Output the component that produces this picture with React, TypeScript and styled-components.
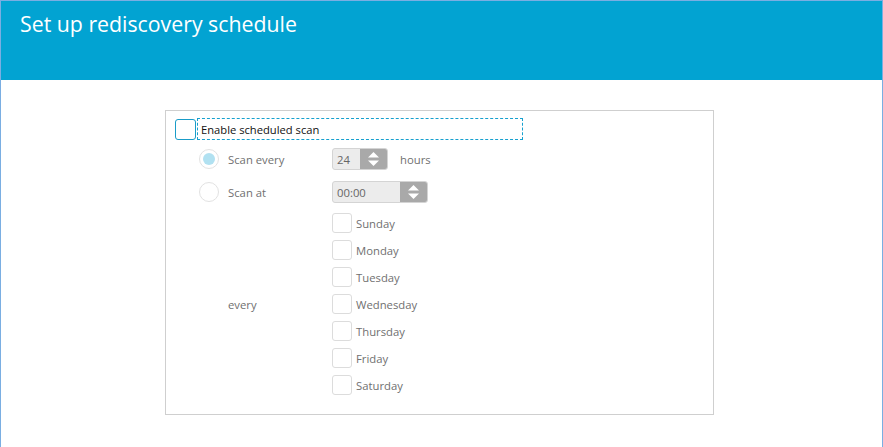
import React from "react";
import styled, { createGlobalStyle } from "styled-components";

const GlobalStyle = createGlobalStyle`
  html, body {
    margin: 0;
    padding: 0;
    background: #ffffff;
  }
  body {
    font-family: "Open Sans", "Noto Sans", "Liberation Sans", sans-serif;
  }
`;

const Window = styled.div`
  box-sizing: border-box;
  width: 883px;
  height: 447px;
  border: 1px solid #7aaee2;
  border-bottom: none;
  background: #ffffff;
  overflow: hidden;
`;

const Header = styled.header`
  height: 79px;
  background: #02a3d2;
  padding: 8px 0 0 19px;
  box-sizing: border-box;
`;

const Title = styled.h1`
  margin: 0;
  color: #ffffff;
  font-size: 21.3px;
  font-weight: 400;
`;

const Body = styled.main`
  padding: 30px 0 0 164px;
`;

const Panel = styled.section`
  box-sizing: border-box;
  width: 549px;
  height: 305px;
  border: 1px solid #cfcfcf;
  padding: 7px 0 0 9px;
`;

const EnableRow = styled.label`
  display: flex;
  align-items: center;
  gap: 1px;
`;

const Box = styled.span<{ $focus?: boolean }>`
  box-sizing: border-box;
  width: 21px;
  height: 21px;
  border: 1px solid ${(p) => (p.$focus ? "#1a9cc8" : "#dcdcdc")};
  border-radius: 3px;
  background: #ffffff;
  flex: none;
`;

const FocusLabel = styled.span`
  box-sizing: border-box;
  width: 326px;
  height: 22px;
  border: 1px dashed #16a0cf;
  display: flex;
  align-items: center;
  padding-left: 3px;
  font-size: 11.2px;
  color: #111111;
`;

const Options = styled.div`
  display: grid;
  grid-template-columns: 20px 95px auto;
  column-gap: 9px;
  margin: 8px 0 0 24px;
  align-items: center;
`;

const Radio = styled.span<{ $checked?: boolean; $row: number }>`
  grid-column: 1;
  grid-row: ${(p) => p.$row};
  box-sizing: border-box;
  width: 20px;
  height: 20px;
  border-radius: 50%;
  border: 1px solid #e2e2e2;
  background: #ffffff;
  display: flex;
  align-items: center;
  justify-content: center;
  &::after {
    content: "";
    width: 12px;
    height: 12px;
    border-radius: 50%;
    background: ${(p) => (p.$checked ? "#b1e1f1" : "transparent")};
  }
`;

const Label = styled.span`
  font-size: 11.3px;
  color: #707070;
`;

const OptionLabel = styled(Label)<{ $row: number }>`
  grid-column: 2;
  grid-row: ${(p) => p.$row};
`;

const Cell = styled.div<{ $row: number }>`
  grid-column: 3;
  grid-row: ${(p) => p.$row};
  display: flex;
  align-items: center;
  gap: 12px;
`;

const Spinner = styled.div<{ $width: number }>`
  box-sizing: border-box;
  width: ${(p) => p.$width}px;
  height: 22px;
  display: flex;
  border: 1px solid #d4d4d4;
  border-radius: 3px;
  background: #ececec;
  overflow: hidden;
`;

const SpinValue = styled.span`
  flex: 1;
  padding-left: 4px;
  display: flex;
  align-items: center;
  font-size: 11.3px;
  color: #666666;
`;

const SpinButton = styled.span`
  width: 27px;
  background: #a9a9a9;
  display: flex;
  align-items: center;
  justify-content: center;
`;

const RowGap = styled.div<{ $h: number; $row: number }>`
  grid-column: 1 / -1;
  grid-row: ${(p) => p.$row};
  height: ${(p) => p.$h}px;
`;

const Days = styled.div`
  grid-column: 3;
  grid-row: 5;
  display: flex;
  flex-direction: column;
  gap: 7px;
`;

const Day = styled.label`
  display: flex;
  align-items: center;
  gap: 4px;
`;

const DayBox = styled.span`
  box-sizing: border-box;
  width: 20px;
  height: 20px;
  border: 1px solid #dcdcdc;
  border-radius: 3px;
  background: #ffffff;
`;

const Arrows = () => (
  <svg width="13" height="16" viewBox="0 0 13 16">
    <path d="M6.5 1 L12 6.5 H1 Z" fill="#ffffff" />
    <path d="M1 9.5 H12 L6.5 15 Z" fill="#ffffff" />
  </svg>
);

const days = ["Sunday", "Monday", "Tuesday", "Wednesday", "Thursday", "Friday", "Saturday"];

export default function App() {
  return (
    <>
      <GlobalStyle />
      <Window>
        <Header>
          <Title>Set up rediscovery schedule</Title>
        </Header>
        <Body>
          <Panel>
            <EnableRow>
              <Box $focus />
              <FocusLabel>Enable scheduled scan</FocusLabel>
            </EnableRow>
            <Options>
              <Radio $checked $row={1} />
              <OptionLabel $row={1}>Scan every</OptionLabel>
              <Cell $row={1}>
                <Spinner $width={56}>
                  <SpinValue>24</SpinValue>
                  <SpinButton>
                    <Arrows />
                  </SpinButton>
                </Spinner>
                <Label>hours</Label>
              </Cell>
              <RowGap $h={11} $row={2} />
              <Radio $row={3} />
              <OptionLabel $row={3}>Scan at</OptionLabel>
              <Cell $row={3}>
                <Spinner $width={96}>
                  <SpinValue>00:00</SpinValue>
                  <SpinButton>
                    <Arrows />
                  </SpinButton>
                </Spinner>
              </Cell>
              <RowGap $h={10} $row={4} />
              <OptionLabel $row={5}>every</OptionLabel>
              <Days>
                {days.map((d) => (
                  <Day key={d}>
                    <DayBox />
                    <Label>{d}</Label>
                  </Day>
                ))}
              </Days>
            </Options>
          </Panel>
        </Body>
      </Window>
    </>
  );
}
